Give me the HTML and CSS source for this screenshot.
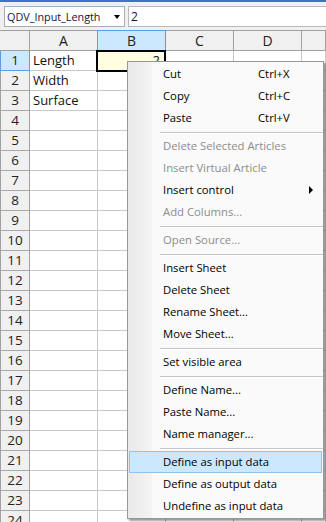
FILE: index.html
```html
<!DOCTYPE html>
<html>
<head>
<meta charset="utf-8">
<link rel="stylesheet" href="styles.css">
</head>
<body>
<div class="toolbar">
  <div class="namebox"><span class="nametext">QDV_Input_Length</span><span class="caret"></span></div>
  <div class="formula">2</div>
</div>
<div class="sheet">
  <div class="ch corner"></div><div class="ch">A</div><div class="ch sel">B</div><div class="ch">C</div><div class="ch">D</div><div class="ch"></div>
  <div class="rh sel">1</div><div class="c">Length</div><div class="c active"><span class="num">2</span></div><div class="c"></div><div class="c"></div><div class="c"></div>
  <div class="rh">2</div><div class="c">Width</div><div class="c"></div><div class="c"></div><div class="c"></div><div class="c"></div>
  <div class="rh">3</div><div class="c">Surface</div><div class="c"></div><div class="c"></div><div class="c"></div><div class="c"></div>
  <div class="rh">4</div><div class="c"></div><div class="c"></div><div class="c"></div><div class="c"></div><div class="c"></div>
  <div class="rh">5</div><div class="c"></div><div class="c"></div><div class="c"></div><div class="c"></div><div class="c"></div>
  <div class="rh">6</div><div class="c"></div><div class="c"></div><div class="c"></div><div class="c"></div><div class="c"></div>
  <div class="rh">7</div><div class="c"></div><div class="c"></div><div class="c"></div><div class="c"></div><div class="c"></div>
  <div class="rh">8</div><div class="c"></div><div class="c"></div><div class="c"></div><div class="c"></div><div class="c"></div>
  <div class="rh">9</div><div class="c"></div><div class="c"></div><div class="c"></div><div class="c"></div><div class="c"></div>
  <div class="rh">10</div><div class="c"></div><div class="c"></div><div class="c"></div><div class="c"></div><div class="c"></div>
  <div class="rh">11</div><div class="c"></div><div class="c"></div><div class="c"></div><div class="c"></div><div class="c"></div>
  <div class="rh">12</div><div class="c"></div><div class="c"></div><div class="c"></div><div class="c"></div><div class="c"></div>
  <div class="rh">13</div><div class="c"></div><div class="c"></div><div class="c"></div><div class="c"></div><div class="c"></div>
  <div class="rh">14</div><div class="c"></div><div class="c"></div><div class="c"></div><div class="c"></div><div class="c"></div>
  <div class="rh">15</div><div class="c"></div><div class="c"></div><div class="c"></div><div class="c"></div><div class="c"></div>
  <div class="rh">16</div><div class="c"></div><div class="c"></div><div class="c"></div><div class="c"></div><div class="c"></div>
  <div class="rh">17</div><div class="c"></div><div class="c"></div><div class="c"></div><div class="c"></div><div class="c"></div>
  <div class="rh">18</div><div class="c"></div><div class="c"></div><div class="c"></div><div class="c"></div><div class="c"></div>
  <div class="rh">19</div><div class="c"></div><div class="c"></div><div class="c"></div><div class="c"></div><div class="c"></div>
  <div class="rh">20</div><div class="c"></div><div class="c"></div><div class="c"></div><div class="c"></div><div class="c"></div>
  <div class="rh">21</div><div class="c"></div><div class="c"></div><div class="c"></div><div class="c"></div><div class="c"></div>
  <div class="rh">22</div><div class="c"></div><div class="c"></div><div class="c"></div><div class="c"></div><div class="c"></div>
  <div class="rh">23</div><div class="c"></div><div class="c"></div><div class="c"></div><div class="c"></div><div class="c"></div>
  <div class="rh">24</div><div class="c"></div><div class="c"></div><div class="c"></div><div class="c"></div><div class="c"></div>
</div>
<div class="menu">
  <div class="item"><span class="label">Cut</span><span class="key">Ctrl+X</span></div>
  <div class="item"><span class="label">Copy</span><span class="key">Ctrl+C</span></div>
  <div class="item"><span class="label">Paste</span><span class="key">Ctrl+V</span></div>
  <div class="sep"></div>
  <div class="item dis"><span class="label">Delete Selected Articles</span></div>
  <div class="item dis"><span class="label">Insert Virtual Article</span></div>
  <div class="item"><span class="label">Insert control</span><span class="arrow"></span></div>
  <div class="item dis"><span class="label">Add Columns...</span></div>
  <div class="sep"></div>
  <div class="item dis"><span class="label">Open Source...</span></div>
  <div class="sep"></div>
  <div class="item"><span class="label">Insert Sheet</span></div>
  <div class="item"><span class="label">Delete Sheet</span></div>
  <div class="item"><span class="label">Rename Sheet...</span></div>
  <div class="item"><span class="label">Move Sheet...</span></div>
  <div class="sep"></div>
  <div class="item"><span class="label">Set visible area</span></div>
  <div class="sep"></div>
  <div class="item"><span class="label">Define Name...</span></div>
  <div class="item"><span class="label">Paste Name...</span></div>
  <div class="item"><span class="label">Name manager...</span></div>
  <div class="sep"></div>
  <div class="item hot"><span class="label">Define as input data</span></div>
  <div class="item"><span class="label">Define as output data</span></div>
  <div class="item"><span class="label">Undefine as input data</span></div>
</div>
</body>
</html>
```
FILE: styles.css
```css
* { box-sizing: border-box; margin: 0; padding: 0; }
html, body { width: 326px; height: 522px; overflow: hidden; background: #fff; }
body { position: relative; font-family: "Open Sans", "Noto Sans", sans-serif; color: #000; }

.toolbar {
  height: 30px;
  background: #f0f0f0;
  border-top: 2px solid #3e73c9;
  display: flex;
  align-items: flex-start;
  gap: 3px;
  padding: 4px 0 0 4px;
}
.namebox {
  width: 121px;
  height: 21px;
  background: #fff;
  border: 1px solid #a9abb3;
  display: flex;
  align-items: center;
  padding-left: 2px;
  font-size: 10.8px;
  color: #14143c;
}
.caret {
  margin-left: auto;
  margin-right: 4px;
  width: 0; height: 0;
  border-left: 3.5px solid transparent;
  border-right: 3.5px solid transparent;
  border-top: 4px solid #000;
}
.formula {
  flex: 1;
  height: 21px;
  background: #fff;
  border: 1px solid #b9b9b9;
  border-right: none;
  padding-left: 2px;
  font-size: 12px;
  line-height: 19px;
  color: #14143c;
}

.sheet {
  display: grid;
  grid-template-columns: 30px 68px 68px 68px 68px 1fr;
  grid-template-rows: 21px;
  grid-auto-rows: 20px;
  font-size: 13px;
  color: #111;
}
.c {
  border-right: 1px solid #c8c8c8;
  border-bottom: 1px solid #c8c8c8;
  padding-left: 3px;
  line-height: 19px;
  white-space: nowrap;
}
.ch {
  background: #f0f0f0;
  border-top: 1px solid #a0a0a0;
  border-right: 1px solid #a0a0a0;
  border-bottom: 1px solid #a0a0a0;
  text-align: center;
  line-height: 19px;
  font-size: 14px;
  color: #222;
}
.rh {
  background: #f0f0f0;
  border-left: 1px solid #a0a0a0;
  border-right: 1px solid #a0a0a0;
  border-bottom: 1px solid #a8a8a8;
  text-align: center;
  line-height: 19px;
  font-size: 13.5px;
  color: #222;
}
.ch.sel, .rh.sel {
  background: #cce8ff;
  border-color: #5a9ee6;
}
.ch.sel { border-left: 1px solid #5a9ee6; margin-left: -1px; }
.active {
  position: relative;
  background: #fffee1;
  text-align: right;
  padding-right: 5px;
}
.active::after {
  content: "";
  position: absolute;
  left: -2px; top: -1px; right: -1px; bottom: -2px;
  border: 2px solid #000;
}

.menu {
  position: absolute;
  left: 127px;
  top: 61px;
  width: 197px;
  border: 1px solid #979797;
  padding: 1px 0;
  background: linear-gradient(to right, #e9e9e9 0, #f3f3f3 22px, #f5f5f5 24px, #fafafa 24px);
  box-shadow: 2px 2px 2px rgba(0, 0, 0, 0.4);
  font-size: 11.3px;
}
.item {
  height: 22px;
  line-height: 22px;
  display: flex;
  align-items: center;
  padding-left: 35px;
  white-space: nowrap;
}
.label { flex: 0 0 95px; }
.dis { color: #8d8d8d; }
.hot {
  margin: 0 1px;
  padding-left: 33px;
  background: #cce8ff;
  border: 1px solid #8fc3ef;
  line-height: 20px;
}
.arrow {
  margin-left: auto;
  margin-right: 10px;
  width: 0; height: 0;
  border-top: 4px solid transparent;
  border-bottom: 4px solid transparent;
  border-left: 4px solid #000;
}
.sep {
  height: 6px;
  padding-top: 3px;
  margin-left: 32px;
}
.sep::before {
  content: "";
  display: block;
  border-top: 1px solid #c8c8c8;
  border-bottom: 1px solid #fff;
}
```
